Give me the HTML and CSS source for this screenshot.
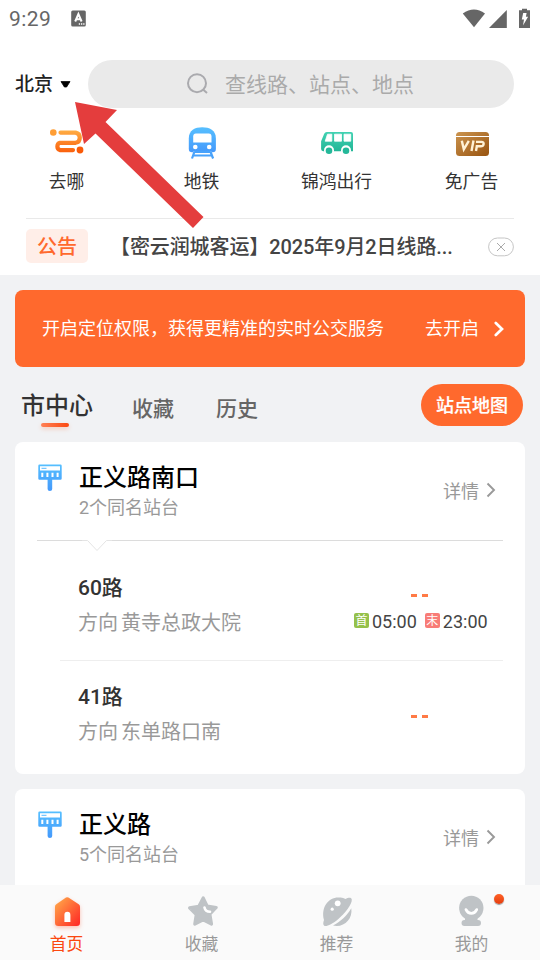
FILE: index.html
```html
<!DOCTYPE html>
<html lang="zh-CN">
<head>
<meta charset="utf-8">
<title>公交首页</title>
<link rel="stylesheet" href="styles.css">
</head>
<body>
<svg class="defs" width="0" height="0" aria-hidden="true">
  <defs>
    <linearGradient id="orangeLine" gradientUnits="userSpaceOnUse" x1="0" y1="3" x2="0" y2="27"><stop offset="0" stop-color="#ffae45"/><stop offset="1" stop-color="#fa5a08"/></linearGradient>
    <linearGradient id="blue" x1="0" y1="0" x2="0" y2="1"><stop offset="0" stop-color="#56bfff"/><stop offset="1" stop-color="#4499fb"/></linearGradient>
    <linearGradient id="green" x1="0" y1="0" x2="0" y2="1"><stop offset="0" stop-color="#41d2b2"/><stop offset="1" stop-color="#22b697"/></linearGradient>
    <linearGradient id="gold" x1="0" y1="0" x2="1" y2="1"><stop offset="0" stop-color="#cb944f"/><stop offset="1" stop-color="#98530f"/></linearGradient>
    <linearGradient id="home" x1="0" y1="0" x2="1" y2="1"><stop offset="0" stop-color="#ffb04b"/><stop offset="1" stop-color="#ff2424"/></linearGradient>
    <symbol id="stop" viewBox="0 0 24 27">
      <path fill="url(#blue)" d="M1.5 0.5h21a1.2 1.2 0 0 1 1.2 1.2v12.800a1.2 1.2 0 0 1-1.200 1.200H14.200V25a2.300 1.900 0 0 1-4.600 0v-9.300H1.500a1.200 1.200 0 0 1-1.200-1.200V1.700A1.200 1.200 0 0 1 1.500 .5z"/>
      <path fill="#fff" d="M2 2.200h20v4.200H2zM3.300 8.800h2v4.300h-2zM8.400 8.800h2v4.300h-2zM13.500 8.800h2v4.300h-2zM18.600 8.800h2v4.300h-2z"/>
      <path fill="#55b8fe" d="M3.500 3.800h5v1h-5z"/>
    </symbol>
    <symbol id="chevron" viewBox="0 0 10 16"><path d="M1.500 1.500 8 8l-6.500 6.500" fill="none" stroke="currentColor" stroke-width="1.900"/></symbol>
  </defs>
</svg>
<div class="app">
  <header class="top">
    <div class="status">
      <span class="clock">9:29</span>
      <svg class="kbd" width="15" height="17" viewBox="0 0 15 17"><rect x=".2" y=".5" width="14.600" height="16" rx="1.500" fill="#666"/><path d="M4.200 11.500 7.400 4 10.600 11.500M5.300 9.300h4.200" fill="none" stroke="#fff" stroke-width="2"/><path d="M7.800 14h1.300m.9 0h1.300m.9 0h1.300" stroke="#fff" stroke-width="1.300"/></svg>
      <svg class="signals" width="70" height="22" viewBox="0 0 70 22"><path d="M.8 5.500Q12-2.700 23 5.500L12 19.300z" fill="#666"/><path d="M44.800 2v17.900H27z" fill="#666"/><path d="M57 2.200h3V.8h5v1.400h3v17.700H57z" fill="#666"/><path d="M61.200 5h3.400l-.7 3.800h2.200L61 17.500l1-6h-2.200z" fill="#fff"/></svg>
    </div>
    <div class="searchrow">
      <div class="city"><span>北京</span><svg width="11" height="7" viewBox="0 0 11 7"><path d="M1 .600h9L6.600 6H4.400z" fill="#000" stroke="#000" stroke-width=".8" stroke-linejoin="round"/></svg></div>
      <div class="search">
        <svg width="22" height="22" viewBox="0 0 22 22" fill="none" stroke="#aaaaae" stroke-width="2"><circle cx="11" cy="10.200" r="9"/><path d="m17 16.500 4 3.500"/></svg>
        <span>查线路、站点、地点</span>
      </div>
    </div>
    <nav class="quick">
      <div class="quickitem">
        <svg width="36" height="34" viewBox="0 0 36 34"><circle cx="4.300" cy="5.500" r="3.300" fill="#ff9e35"/><circle cx="31" cy="23" r="3.400" fill="#fa5a08"/><path d="M11.500 5.600H26.600a5.200 5.200 0 0 1 0 10.200H11a3.850 3.850 0 0 0 0 7.300H24" fill="none" stroke="url(#orangeLine)" stroke-width="4.200" stroke-linecap="round"/></svg>
        <span>去哪</span>
      </div>
      <div class="quickitem">
        <svg width="36" height="34" viewBox="0 0 36 34"><path d="M4.800 11.500C4.800 3 11 .2 18.200.2S31.900 3 31.900 11.500V22q0 3.200-3.200 3.200H8q-3.200 0-3.200-3.200z" fill="url(#blue)"/><path d="M9.200 15.500v-6q0-3 2.700-3h12.900q2.700 0 2.700 3v6z" fill="#fff"/><circle cx="11.300" cy="20" r="2.300" fill="#fff"/><circle cx="25.200" cy="20" r="2.300" fill="#fff"/><path d="M9.500 24.300h17.800L30 32H7z" fill="#fff"/><path d="M10.500 24.500 8 31.500m18.400-7 2.700 7M9.500 28.500h18M10.500 24.800h16" fill="none" stroke="#48a2fb" stroke-width="2.200"/></svg>
        <span>地铁</span>
      </div>
      <div class="quickitem">
        <svg width="36" height="34" viewBox="0 0 36 34"><path d="M7.800 5H32a2 2 0 0 1 2 2v17.200H4.200A2.200 2.200 0 0 1 2.100 22V14.300L5.200 6.700Q6 5 7.800 5z" fill="url(#green)"/><path d="m8.500 7.200h4.300v7H6.200zM15.500 7.200h7v7h-7zM25 7.200h6.700v7H25z" fill="#fff" stroke="#fff" stroke-width=".8" stroke-linejoin="round"/><circle cx="10" cy="23.200" r="5" fill="#fff"/><circle cx="27" cy="23.200" r="5" fill="#fff"/><circle cx="10" cy="23.800" r="3.300" fill="#24b899"/><circle cx="27" cy="23.800" r="3.300" fill="#24b899"/></svg>
        <span>锦鸿出行</span>
      </div>
      <div class="quickitem">
        <svg width="36" height="34" viewBox="0 0 36 34"><rect x="2" y="5" width="33" height="24" rx="3.500" fill="url(#gold)"/><path d="M2 9.500h33" stroke="#fff" stroke-width="1.200"/><path d="m7.800 13.800 2 8.500 5-8.500M19.500 13.500l-2 10.500M22 14.900h5.500c3.300 0 2.600 4.400-.8 4.400H22.800L22 24" fill="none" stroke="#fff2d6" stroke-width="2.400"/></svg>
        <span>免广告</span>
      </div>
    </nav>
    <div class="notice">
      <span class="tag">公告</span>
      <span class="noticetext">【密云润城客运】2025年9月2日线路...</span>
      <svg width="26" height="20" viewBox="0 0 26 20" fill="none" stroke="#c5c5c5"><rect x=".6" y="1" width="24.800" height="17.800" rx="8.900"/><path d="m9 6 8 8m0-8-8 8" stroke="#aaa"/></svg>
    </div>
  </header>
  <main class="content">
    <div class="banner">
      <span>开启定位权限，获得更精准的实时公交服务</span>
      <span class="enable">去开启</span>
      <svg width="10" height="16" viewBox="0 0 10 16"><path d="M1.800 2 8 8l-6.200 6" fill="none" stroke="#fff" stroke-width="2.700" stroke-linecap="round"/></svg>
    </div>
    <div class="tabs">
      <span class="tab active">市中心</span>
      <span class="tab">收藏</span>
      <span class="tab">历史</span>
      <span class="mapbtn">站点地图</span>
    </div>
    <section class="card">
      <div class="station">
        <svg class="stopicon" width="24" height="27"><use href="#stop"/></svg>
        <div class="stationinfo"><h2>正义路南口</h2><p>2个同名站台</p></div>
        <span class="detail">详情<svg width="10" height="16"><use href="#chevron"/></svg></span>
      </div>
      <svg class="fold" width="466" height="12" viewBox="0 0 466 12"><path d="M0 .5H50M71 .5H466" fill="none" stroke="#dcdcdc"/><path d="M45 .5H50.500L60 10.500 69.500 .5H75" fill="none" stroke="#e4e4e4"/></svg>
      <div class="route first">
        <div><h3>60路</h3><p>方向 黄寺总政大院</p></div>
        <div class="eta"><b class="dashes"><i></i><i></i></b>
          <div class="times"><em class="start">首</em><span>05:00</span><em class="end">末</em><span>23:00</span></div>
        </div>
      </div>
      <div class="route second">
        <div><h3>41路</h3><p>方向 东单路口南</p></div>
        <div class="eta"><b class="dashes"><i></i><i></i></b></div>
      </div>
    </section>
    <section class="card next">
      <div class="station">
        <svg class="stopicon" width="24" height="27"><use href="#stop"/></svg>
        <div class="stationinfo"><h2>正义路</h2><p>5个同名站台</p></div>
        <span class="detail">详情<svg width="10" height="16"><use href="#chevron"/></svg></span>
      </div>
    </section>
  </main>
  <footer class="tabbar">
    <div class="baritem on">
      <svg class="homeicon" width="34" height="34" viewBox="0 0 34 34"><path d="M16 2.600q1.200-.8 2.400 0l10.300 6.600q1.300.9 1.300 2.500v16q0 3.300-3.300 3.300H8.300q-3.300 0-3.300-3.300V11.700q0-1.600 1.300-2.500z" fill="url(#home)"/><path d="M14.400 27v-7q0-3.200 3-3.200t3 3.200v7z" fill="#fff"/></svg>
      <span>首页</span>
    </div>
    <div class="baritem">
      <svg width="34" height="34" viewBox="0 0 34 34"><path d="m18.200 3 4 8.200 9 1.300-6.400 6.600 1.700 10-8.300-4.200-8.400 4.200 1.500-9.500-6.700-6.700 9.300-1.600z" fill="#bfc3c6" stroke="#bfc3c6" stroke-width="3.200" stroke-linejoin="round"/><path d="M19.500 12.500c.5 2.600 2.600 4.300 5.500 4.300" fill="none" stroke="#fff" stroke-width="2.600" stroke-linecap="round"/></svg>
      <span>收藏</span>
    </div>
    <div class="baritem">
      <svg width="34" height="34" viewBox="0 0 34 34"><path d="M4 25C.5 12 9 1 20.500 2.600c2 .2 3.500.7 5 1.500 2.500-1.700 6-2.100 6.300.4.400 4.500-6.800 14-14 20-5.500 4.600-11 7.200-13.200 6.400-1.800-.7-1.600-3-.6-5.900z" fill="#bfc3c6"/><path d="M31.300 13.200C33 24.500 23.500 33 13 30.500 20.500 26.800 27 20.500 31.300 13.200z" fill="#bfc3c6"/><circle cx="17.700" cy="8.300" r="2.900" fill="#fff"/><circle cx="12.200" cy="14.200" r="1.600" fill="#fff"/></svg>
      <span>推荐</span>
    </div>
    <div class="baritem">
      <svg width="34" height="34" viewBox="0 0 34 34" fill="#bfc3c6"><circle cx="16.300" cy="13" r="12.200"/><path d="M10 22h12.500v3h.5a3 3 0 0 1 0 6h-13.500a3 3 0 0 1 0-6h.5z"/><path d="M11 14.600c2.400 5 8.300 5 10.700 0" fill="none" stroke="#fff" stroke-width="2.800" stroke-linecap="round"/></svg>
      <span>我的</span>
      <i class="dot"></i>
    </div>
  </footer>
  <svg class="arrow" width="130" height="128" viewBox="0 0 130 128"><path d="M0 0 42 8 30.500 20 128.500 115 118 126 20.500 31.500 9 42z" fill="#e43d3d"/></svg>
</div>
</body>
</html>
```

FILE: styles.css
```css
* { box-sizing: border-box; }
body { margin: 0; font-family: Roboto, "Noto Sans CJK SC", sans-serif; color: #333; background: #f1f2f4; }
h2, h3, p { margin: 0; }
i, em { font-style: normal; }
svg { display: block; flex: none; }
.defs { position: absolute; }
.app { position: relative; width: 540px; height: 960px; display: flex; flex-direction: column; overflow: hidden; white-space: nowrap; }

.top { height: 275px; background: #fff; flex: none; }
.status { height: 36px; display: flex; align-items: center; padding: 1px 8px 0 9px; }
.clock { font-size: 21px; color: #666; letter-spacing: .4px; }
.kbd { margin-left: 20px; }
.signals { margin-left: auto; width: 70px; }
.searchrow { display: flex; align-items: center; height: 48px; margin-top: 24px; padding: 0 26px 0 15px; }
.city { width: 73px; display: flex; align-items: center; gap: 7px; font-size: 19px; font-weight: 500; color: #222; }
.city span { padding-bottom: 3px; }
.search { flex: 1; height: 48px; border-radius: 24px; background: #eaeaea; display: flex; align-items: center; padding-left: 98px; gap: 17px; font-size: 21px; color: #aaa; }
.search svg { margin-bottom: 1px; }
.search span { padding-bottom: 2px; }
.quick { display: grid; grid-template-columns: repeat(4, 1fr); height: 110px; padding-top: 19px; margin: 0 1px 0 -1px; }
.quickitem { display: flex; flex-direction: column; align-items: center; font-size: 17.800px; line-height: 26px; color: #333; }
.quickitem span { margin-top: 8px; }
.notice { height: 57px; margin: 0 26px; padding-bottom: 2px; border-top: 1px solid #e9e9e9; display: flex; align-items: center; }
.notice svg { margin-top: 1px; }
.tag { width: 62px; height: 34px; border-radius: 5px; background: #ffeee8; color: #ff692d; font-size: 20px; font-weight: 500; line-height: 36px; text-align: center; margin-right: 22px; }
.noticetext { font-size: 20px; font-weight: 500; color: #444; flex: 1; letter-spacing: -.1px; padding-bottom: 2px; }

.content { flex: 1; min-height: 0; padding: 15px 15px 0; overflow: hidden; }
.banner { height: 77px; border-radius: 8px; background: #ff692d; color: #fff; font-size: 18px; display: flex; align-items: center; padding: 0 21px 0 27px; }
.banner span { padding-bottom: 3px; }
.enable { margin-left: auto; margin-right: 15px; }
.tabs { display: flex; height: 75px; padding: 0 2px 0 6px; }
.tab { font-size: 21px; line-height: 30px; color: #666; font-weight: 500; margin: 27px 42px 0 0; }
.tab.active { font-size: 24px; line-height: 36px; color: #333; margin: 21px 39px 0 0; height: 41px; display: flex; flex-direction: column; align-items: center; }
.tab.active::after { content: ""; flex: none; width: 28px; height: 4px; margin: -1px 4px 0 0; border-radius: 2px; background: linear-gradient(90deg, #ff8055, #fb4810); box-shadow: 0 2px 4px #ff692d44; }
.mapbtn { margin: 17px 0 0 auto; width: 102px; height: 42px; line-height: 43px; border-radius: 21px; background: #ff692d; color: #fff; font-size: 18px; font-weight: 500; -webkit-text-stroke: .2px #fff; text-align: center; }

.card { height: 332px; background: #fff; border-radius: 8px; padding: 0 22px; }
.next { margin-top: 15px; }
.station { height: 98px; display: flex; }
.stopicon { margin: 22px -1px 0 1px; }
.stationinfo { flex: 1; padding: 18px 0 0 18px; }
.stationinfo h2 { font-size: 24px; line-height: 36px; font-weight: 500; color: #000; }
.stationinfo p { font-size: 18px; line-height: 26px; color: #999; margin-top: -1px; }
.detail { display: flex; align-items: center; gap: 7px; height: 26px; margin: 35px 7px 0 0; font-size: 18px; color: #999; }
.route { display: flex; justify-content: space-between; }
.first { height: 109px; margin-left: 23px; padding-left: 18px; border-bottom: 1px solid #eee; }
.second { padding-left: 41px; }
.route h3 { font-size: 21px; line-height: 30px; font-weight: 500; margin-top: 21px; color: #333; }
.route p { font-size: 20px; line-height: 30px; margin-top: 5px; color: #999; word-spacing: -2px; }
.eta { width: 149px; }
.dashes { display: flex; gap: 5px; margin: 42px 0 0 57px; }
.dashes i { width: 6px; height: 3px; background: #ff7a45; }
.second .dashes { margin-top: 54px; }
.times { display: flex; align-items: center; margin-top: 14px; height: 20px; font-size: 18px; color: #444; }
.times em { width: 15px; height: 15px; border-radius: 2px; color: #fff; font-size: 12px; line-height: 16px; text-align: center; margin: 0 3px 2px 0; }
.times .start { background: #95c14b; }
.times .end { background: #f87c77; margin-left: 8px; }

.tabbar { height: 75px; flex: none; background: #fafafa; display: grid; grid-template-columns: repeat(4, 1fr); }
.baritem { position: relative; left: -1px; display: flex; flex-direction: column; align-items: center; padding-top: 10px; font-size: 16.800px; line-height: 24px; color: #999; }
.baritem span { margin-top: 3px; }
.on { color: #fb4810; }
.homeicon { filter: drop-shadow(0 2px 2px #ff4a2455); }
.dot { position: absolute; left: 90px; top: 9px; width: 10px; height: 10px; border-radius: 50%; background: linear-gradient(#ff6228, #e43c0d); box-shadow: 0 1px 1px #0006; }
.arrow { position: absolute; left: 75px; top: 102px; }
```
